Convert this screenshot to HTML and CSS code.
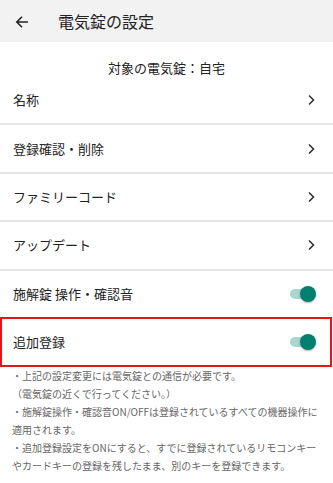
FILE: index.html
```html
<!DOCTYPE html>
<html lang="ja">
<head>
<meta charset="utf-8">
<link rel="stylesheet" href="styles.css">
</head>
<body>
<div class="screen">
  <header class="appbar">
    <svg class="back" width="14" height="14" viewBox="0 0 14 14"><path d="M13 7H2M7 1.8L1.8 7 7 12.2" fill="none" stroke="#222" stroke-width="1.6"/></svg>
    <h1 class="title">電気錠の設定</h1>
  </header>
  <div class="target">対象の電気錠：自宅</div>
  <ul class="list">
    <li class="row"><span class="label">名称</span><svg class="chev" width="10" height="12" viewBox="0 0 10 12"><path d="M3 1.5L7.5 6 3 10.5" fill="none" stroke="#333" stroke-width="1.6"/></svg></li>
    <li class="row"><span class="label">登録確認・削除</span><svg class="chev" width="10" height="12" viewBox="0 0 10 12"><path d="M3 1.5L7.5 6 3 10.5" fill="none" stroke="#333" stroke-width="1.6"/></svg></li>
    <li class="row"><span class="label">ファミリーコード</span><svg class="chev" width="10" height="12" viewBox="0 0 10 12"><path d="M3 1.5L7.5 6 3 10.5" fill="none" stroke="#333" stroke-width="1.6"/></svg></li>
    <li class="row"><span class="label">アップデート</span><svg class="chev" width="10" height="12" viewBox="0 0 10 12"><path d="M3 1.5L7.5 6 3 10.5" fill="none" stroke="#333" stroke-width="1.6"/></svg></li>
    <li class="row"><span class="label">施解錠 操作・確認音</span><span class="switch"><span class="track"></span><span class="thumb"></span></span></li>
    <li class="row highlight"><span class="label">追加登録</span><span class="switch"><span class="track"></span><span class="thumb"></span></span></li>
  </ul>
  <div class="notes">
    <p>・上記の設定変更には電気錠との通信が必要です。</p>
    <p>（電気錠の近くで行ってください。）</p>
    <p>・施解錠操作・確認音ON/OFFは登録されているすべての機器操作に適用されます。</p>
    <p>・追加登録設定をONにすると、すでに登録されているリモコンキーやカードキーの登録を残したまま、別のキーを登録できます。</p>
  </div>
</div>
</body>
</html>
```
FILE: styles.css
```css
* { box-sizing: border-box; }
html, body { margin: 0; padding: 0; background: #fff; }
body {
  font-family: "Noto Sans CJK JP", "Noto Sans", sans-serif;
  color: #222;
}
.screen { width: 333px; height: 483px; overflow: hidden; }
.appbar {
  height: 42px;
  background: #f2f2f2;
  display: flex;
  align-items: center;
  padding-left: 15px;
}
.back { display: block; margin-top: 1px; }
.title {
  margin: 0 0 0 29px;
  font-size: 16px;
  font-weight: 400;
  line-height: 20px;
  color: #222;
}
.target {
  padding-top: 17px;
  height: 35px;
  line-height: 18px;
  font-size: 13px;
  text-align: center;
  color: #222;
}
.list { list-style: none; margin: 0; padding: 0; }
.row {
  height: 48.4px;
  border-bottom: 2px solid #e6e6e6;
  display: flex;
  align-items: center;
  justify-content: space-between;
  padding: 0 17px 0 13px;
  font-size: 13px;
  position: relative;
}
.label { line-height: 18px; }
.chev { display: block; }
.switch {
  position: relative;
  width: 26px;
  height: 16px;
  margin-right: 0;
}
.track {
  position: absolute;
  left: 0;
  top: 3px;
  width: 24px;
  height: 10px;
  border-radius: 5px;
  background: #a9d6cf;
}
.thumb {
  position: absolute;
  right: 0;
  top: 0;
  width: 16px;
  height: 16px;
  border-radius: 50%;
  background: #00806f;
  box-shadow: 0 1px 2px rgba(0,0,0,0.3);
}
.highlight::after {
  content: "";
  position: absolute;
  left: 0;
  right: 1px;
  top: -2px;
  bottom: -2px;
  border: 2px solid #e8141b;
  pointer-events: none;
}
.notes {
  padding: 0 12px;
  font-size: 10px;
  line-height: 18px;
  color: #666;
}
.notes p { margin: 0; }
```
